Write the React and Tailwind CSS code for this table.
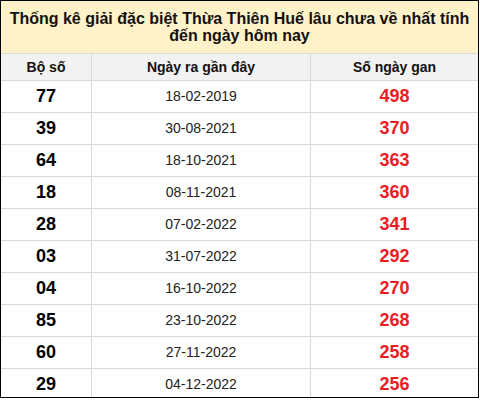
export default function App() {
  const rows = [
    ["77", "18-02-2019", "498"],
    ["39", "30-08-2021", "370"],
    ["64", "18-10-2021", "363"],
    ["18", "08-11-2021", "360"],
    ["28", "07-02-2022", "341"],
    ["03", "31-07-2022", "292"],
    ["04", "16-10-2022", "270"],
    ["85", "23-10-2022", "268"],
    ["60", "27-11-2022", "258"],
    ["29", "04-12-2022", "256"],
  ];
  return (
    <div className="w-[480px] h-[400px] bg-white" style={{ fontFamily: '"Liberation Sans", Arial, sans-serif' }}>
      <div className="w-[479px] h-[398px] border border-black flex flex-col overflow-hidden">
        <div className="h-[53px] shrink-0 bg-[#fff2c8] border-b border-[#d9d9d9] flex flex-col items-center justify-center text-center font-bold text-[16px] leading-[17px] text-[#111] whitespace-nowrap pb-[1px]">
          <div>Thống kê giải đặc biệt Thừa Thiên Huế lâu chưa về nhất tính</div>
          <div>đến ngày hôm nay</div>
        </div>
        <div className="h-[27px] shrink-0 bg-[#f2f2f2] border-b border-[#d9d9d9] grid grid-cols-[90px_1px_218px_1px_167px] text-[14px] font-bold text-[#111]">
          <div className="flex items-center justify-center">Bộ số</div>
          <div className="bg-[#d9d9d9]" />
          <div className="flex items-center justify-center">Ngày ra gần đây</div>
          <div className="bg-[#d9d9d9]" />
          <div className="flex items-center justify-center">Số ngày gan</div>
        </div>
        {rows.map((r, i) => (
          <div
            key={i}
            className="h-[32px] shrink-0 border-b border-[#d9d9d9] grid grid-cols-[90px_1px_218px_1px_167px]"
          >
            <div className="flex items-center justify-center font-bold text-[18px] text-black">{r[0]}</div>
            <div className="bg-[#d9d9d9]" />
            <div className="flex items-center justify-center text-[14px] text-[#222]">{r[1]}</div>
            <div className="bg-[#d9d9d9]" />
            <div className="flex items-center justify-center font-bold text-[18px] text-[#ec1c24]">{r[2]}</div>
          </div>
        ))}
      </div>
    </div>
  );
}
